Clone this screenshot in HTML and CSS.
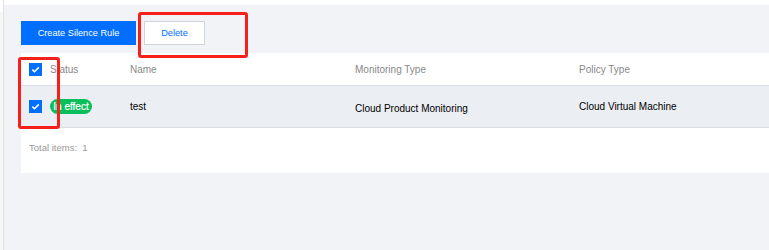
FILE: index.html
```html
<!DOCTYPE html>
<html>
<head>
<meta charset="utf-8">
<link rel="stylesheet" href="styles.css">
</head>
<body>
<div class="app">
  <div class="side"></div>
  <div class="main">
    <div class="toolbar">
      <button class="btn btn-primary">Create Silence Rule</button>
      <button class="btn btn-default">Delete</button>
    </div>
    <div class="panel">
      <div class="row head">
        <div class="cell cb-cell"><span class="cb"><svg viewBox="0 0 13 13" width="13" height="13"><path d="M3.3 6.6 L5.5 8.7 L9.8 4.4" fill="none" stroke="#fff" stroke-width="1.6"/></svg></span></div>
        <div class="cell">Status</div>
        <div class="cell">Name</div>
        <div class="cell">Monitoring Type</div>
        <div class="cell">Policy Type</div>
      </div>
      <div class="row body-row">
        <div class="cell cb-cell"><span class="cb"><svg viewBox="0 0 13 13" width="13" height="13"><path d="M3.3 6.6 L5.5 8.7 L9.8 4.4" fill="none" stroke="#fff" stroke-width="1.6"/></svg></span></div>
        <div class="cell"><span class="badge">In effect</span></div>
        <div class="cell">test</div>
        <div class="cell low">Cloud Product Monitoring</div>
        <div class="cell">Cloud Virtual Machine</div>
      </div>
      <div class="footer">Total items:&nbsp; 1</div>
    </div>
  </div>
</div>
<div class="mark mark-delete"></div>
<div class="mark mark-check"></div>
</body>
</html>
```
FILE: styles.css
```css
html, body {
  margin: 0;
  padding: 0;
}
body {
  font-family: "Liberation Sans", Arial, sans-serif;
  font-size: 10px;
  background: #f2f3f7;
  width: 769px;
  height: 250px;
  overflow: hidden;
}
.app {
  display: flex;
  height: 250px;
}
.side {
  width: 3px;
  background: linear-gradient(#ffffff 0 12px, #f6f6f6 12px);
  border-right: 1px solid #e2e2e2;
}
.main {
  flex: 1;
  background: #f2f3f7;
  border-top: 5px solid #ffffff;
  padding: 16px 0 0 17px;
}
.toolbar {
  display: flex;
  gap: 8px;
  height: 24px;
}
.btn {
  box-sizing: border-box;
  height: 24px;
  margin: 0;
  padding: 0;
  font-family: inherit;
  font-size: 9.2px;
  cursor: pointer;
}
.btn-primary {
  width: 115px;
  background: #006eff;
  color: #ffffff;
  border: none;
}
.btn-default {
  width: 61px;
  background: #ffffff;
  color: #006eff;
  border: 1px solid #cfd5de;
}
.panel {
  margin-top: 8px;
  background: #ffffff;
}
.row {
  display: grid;
  grid-template-columns: 29px 80px 225px 224px 1fr;
  align-items: center;
  border-bottom: 1px solid #d9dde4;
}
.head {
  height: 32px;
  color: #888888;
}
.body-row {
  height: 41px;
  background: #ebeef3;
  color: #000000;
}
.cell {
  white-space: nowrap;
}
.low {
  padding-top: 3px;
}
.cb-cell {
  display: flex;
  padding-left: 8px;
}
.cb {
  display: block;
  width: 13px;
  height: 13px;
  background: #006eff;
}
.cb svg {
  display: block;
}
.badge {
  display: inline-block;
  width: 42px;
  height: 15px;
  line-height: 15px;
  border-radius: 8px;
  background: #0abf5b;
  color: #ffffff;
  font-size: 10px;
  text-align: center;
  -webkit-text-stroke: 0.2px #ffffff;
}
.footer {
  height: 45px;
  line-height: 40px;
  padding-left: 8px;
  color: #999999;
  font-size: 9.5px;
  box-sizing: border-box;
}
.mark {
  position: absolute;
  box-sizing: border-box;
  border: 3px solid #f5201c;
  border-radius: 3px;
}
.mark-delete {
  left: 138px;
  top: 12px;
  width: 110px;
  height: 46px;
}
.mark-check {
  left: 18px;
  top: 57px;
  width: 42px;
  height: 72px;
}
```
